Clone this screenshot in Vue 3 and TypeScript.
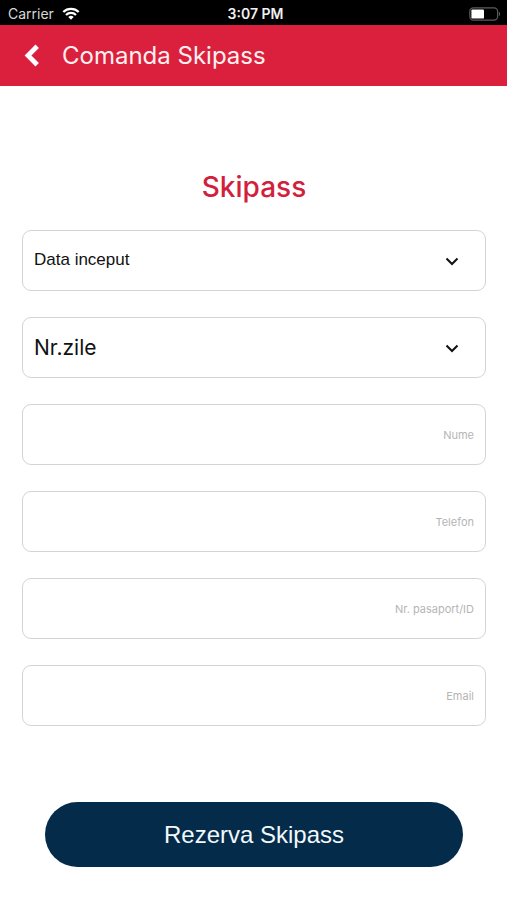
<script setup lang="ts">
import { reactive } from 'vue'

type FieldKey = 'nume' | 'telefon' | 'document' | 'email'

interface TextField {
  key: FieldKey
  label: string
  type: string
}

const fields: TextField[] = [
  { key: 'nume', label: 'Nume', type: 'text' },
  { key: 'telefon', label: 'Telefon', type: 'tel' },
  { key: 'document', label: 'Nr. pasaport/ID', type: 'text' },
  { key: 'email', label: 'Email', type: 'email' },
]

const days: number[] = [1, 2, 3, 4, 5, 6, 7]

const startDates: string[] = Array.from({ length: 7 }, (_, offset) => {
  const date = new Date()
  date.setDate(date.getDate() + offset)
  return date.toISOString().slice(0, 10)
})

const order = reactive({
  start: '',
  days: '',
  nume: '',
  telefon: '',
  document: '',
  email: '',
})
</script>

<template>
  <div class="screen">
    <div class="status">
      <div class="status-left">
        <span class="carrier">Carrier</span>
        <svg class="wifi" viewBox="0 0 18 13" aria-hidden="true">
          <path d="M1.3 5A11 11 0 0 1 16.7 5" />
          <path d="M4 8A7.1 7.1 0 0 1 14 8" />
          <path class="wifi-dot" d="M9 12.8 6.3 10.1a3.8 3.8 0 0 1 5.4 0Z" />
        </svg>
      </div>
      <span class="clock">3:07 PM</span>
      <div class="status-right">
        <svg class="battery" viewBox="0 0 32 14" aria-hidden="true">
          <rect class="battery-case" x="0.8" y="0.8" width="27.8" height="12.4" rx="3.6" />
          <rect class="battery-level" x="2.4" y="2.4" width="12.6" height="9.2" rx="1.2" />
          <path class="battery-tip" d="M29.9 4.8c1.6.6 1.6 3.8 0 4.4Z" />
        </svg>
      </div>
    </div>

    <header class="bar">
      <button class="back" type="button" aria-label="Inapoi">
        <svg viewBox="0 0 16 24" aria-hidden="true">
          <path d="M13.2 2.2 4 11.5l9.2 9.3" />
        </svg>
      </button>
      <h1 class="bar-title">Comanda Skipass</h1>
    </header>

    <main class="content">
      <h2 class="heading">Skipass</h2>
      <form class="form" @submit.prevent>
        <div class="select-box">
          <select v-model="order.start" class="control select-start" aria-label="Data inceput">
            <option value="">Data inceput</option>
            <option v-for="date in startDates" :key="date" :value="date">{{ date }}</option>
          </select>
          <svg class="chevron" viewBox="0 0 14 10" aria-hidden="true"><path d="m1.5 2.5 5.5 5.5 5.5-5.5" /></svg>
        </div>
        <div class="select-box">
          <select v-model="order.days" class="control select-days" aria-label="Nr.zile">
            <option value="">Nr.zile</option>
            <option v-for="day in days" :key="day" :value="String(day)">{{ day }}</option>
          </select>
          <svg class="chevron" viewBox="0 0 14 10" aria-hidden="true"><path d="m1.5 2.5 5.5 5.5 5.5-5.5" /></svg>
        </div>
        <input
          v-for="field in fields"
          :key="field.key"
          v-model="order[field.key]"
          class="control text-input"
          :type="field.type"
          :placeholder="field.label"
          :aria-label="field.label"
        />
        <button class="submit" type="submit">Rezerva Skipass</button>
      </form>
    </main>
  </div>
</template>

<style>
body {
  margin: 0;
  background: #fff;
}
</style>

<style scoped>
.screen {
  min-height: 100vh;
  background: #fff;
  color: #111;
  font-family: Inter, "Liberation Sans", sans-serif;
}

.status {
  display: grid;
  grid-template-columns: 1fr auto 1fr;
  align-items: center;
  height: 25px;
  padding: 2px 6px 0 8px;
  box-sizing: border-box;
  background: #000;
  color: #fff;
  font-size: 14px;
  line-height: 20px;
}

.status-left {
  display: flex;
  align-items: center;
  gap: 8px;
}

.carrier {
  color: #d8d8d8;
}

.wifi {
  width: 18px;
  height: 13px;
  fill: none;
  stroke: #fff;
  stroke-width: 2.3;
}

.wifi .wifi-dot {
  fill: #fff;
  stroke: none;
}

.clock {
  padding-left: 2px;
  color: #f0f0f0;
  font-weight: 600;
}

.status-right {
  display: flex;
  justify-content: flex-end;
}

.battery {
  width: 32px;
  height: 14px;
}

.battery-case {
  fill: none;
  stroke: #5c5c5c;
  stroke-width: 1.2;
}

.battery-level {
  fill: #fff;
}

.battery-tip {
  fill: #5c5c5c;
}

.bar {
  display: flex;
  align-items: center;
  gap: 22px;
  height: 61px;
  padding: 0 24px;
  box-sizing: border-box;
  background: #db203e;
}

.back {
  display: flex;
  padding: 0;
  border: 0;
  background: none;
  cursor: pointer;
}

.back svg {
  width: 16px;
  height: 24px;
  fill: none;
  stroke: #fff;
  stroke-width: 4.8;
}

.bar-title {
  margin: 0;
  color: #fff0f0;
  font-size: 24px;
  font-weight: 400;
  line-height: 32px;
}

.content {
  padding: 81px 21px 32px 22px;
}

.heading {
  margin: 0 0 23px;
  color: #d21f3d;
  font-size: 28px;
  font-weight: 500;
  line-height: 40px;
  text-align: center;
}

.form {
  display: flex;
  flex-direction: column;
  gap: 26px;
}

.select-box {
  display: grid;
  align-items: center;
}

.select-box > * {
  grid-area: 1 / 1;
}

.control {
  width: 100%;
  height: 61px;
  padding: 0 11px;
  box-sizing: border-box;
  border: 1px solid #d4d4d4;
  border-radius: 9px;
  background: #fff;
  color: #111;
  appearance: none;
}

.select-start {
  padding-bottom: 3px;
  font-family: "Liberation Sans", Arial, sans-serif;
  font-size: 17px;
}

.select-days {
  font-family: Inter, sans-serif;
  font-size: 21px;
}

.chevron {
  justify-self: end;
  width: 14px;
  height: 10px;
  margin-right: 27px;
  fill: none;
  stroke: #111;
  stroke-width: 2;
  pointer-events: none;
}

.text-input {
  font-family: Inter, sans-serif;
  font-size: 11px;
  text-align: right;
}

.text-input::placeholder {
  color: #b5b5b5;
  opacity: 1;
}

.submit {
  height: 65px;
  margin: 50px 23px 0;
  border: 0;
  border-radius: 33px;
  background: #052b4a;
  color: #f2f8fc;
  font-family: "Liberation Sans", Arial, sans-serif;
  font-size: 24px;
  cursor: pointer;
}
</style>
